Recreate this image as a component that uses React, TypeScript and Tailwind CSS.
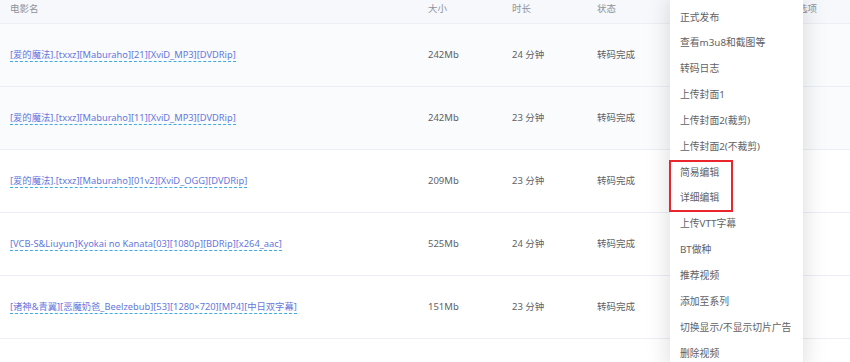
import React from "react";

const rows = [
    { name: "[爱的魔法].[txxz][Maburaho][21][XviD_MP3][DVDRip]", size: "242Mb", dur: "24 分钟", tint: true },
    { name: "[爱的魔法].[txxz][Maburaho][11][XviD_MP3][DVDRip]", size: "242Mb", dur: "23 分钟", tint: true },
    { name: "[爱的魔法].[txxz][Maburaho][01v2][XviD_OGG][DVDRip]", size: "209Mb", dur: "23 分钟", tint: false },
    { name: "[VCB-S&Liuyun]Kyokai no Kanata[03][1080p][BDRip][x264_aac]", size: "525Mb", dur: "24 分钟", tint: false },
    { name: "[诸神&青翼][恶魔奶爸_Beelzebub][53][1280×720][MP4][中日双字幕]", size: "151Mb", dur: "23 分钟", tint: false },
];

const menuItems = [
    "正式发布",
    "查看m3u8和截图等",
    "转码日志",
    "上传封面1",
    "上传封面2(裁剪)",
    "上传封面2(不裁剪)",
    "简易编辑",
    "详细编辑",
    "上传VTT字幕",
    "BT做种",
    "推荐视频",
    "添加至系列",
    "切换显示/不显示切片广告",
    "删除视频",
];

const font = { fontFamily: '"Noto Sans", "Noto Sans CJK SC", sans-serif' };

export default function App() {
    return (
        <div className="relative w-[850px] h-[362px] overflow-hidden bg-white text-[9.5px]" style={font}>
            {/* header */}
            <div className="flex h-[24px] items-center bg-[#f6f8fb] border-b border-[#ebeef5] text-[#909399] pb-[4px]">
                <div className="w-[418px] pl-[10px]">电影名</div>
                <div className="w-[84px] pl-[10px]">大小</div>
                <div className="w-[85px] pl-[10px]">时长</div>
                <div className="w-[211px] pl-[10px]">状态</div>
                <div className="flex-1">选项</div>
            </div>

            {rows.map((r, i) => (
                <div
                    key={i}
                    className={
                        "flex h-[63px] items-center border-b border-[#ebeef5] " +
                        (r.tint ? "bg-[#fafbfd]" : "bg-white")
                    }
                >
                    <div className="w-[418px] pl-[10px]">
                        <span className="text-[9.3px] text-[#6478dc] border-b border-dashed border-[#3fa9e6] leading-[13px] inline-block">
                            {r.name}
                        </span>
                    </div>
                    <div className="w-[84px] pl-[10px] text-[#606266]">{r.size}</div>
                    <div className="w-[85px] pl-[10px] text-[#606266]">{r.dur}</div>
                    <div className="w-[210px] pl-[10px] text-[#606266]">转码完成</div>
                    <div className="flex-1" />
                </div>
            ))}

            {/* dropdown menu */}
            <div className="absolute left-[670px] top-[-2px] w-[133px] bg-white rounded-[4px] shadow-[0_0_24px_rgba(0,0,0,0.15)] pt-[7px] pb-[6px] text-[9.8px]">
                {menuItems.map((m) => (
                    <div key={m} className="h-[25.85px] flex items-center pl-[10px] text-[#606266] whitespace-nowrap">
                        {m}
                    </div>
                ))}
                <div className="absolute left-[-1px] top-[162px] w-[64px] h-[52px] border-2 border-[#e8262b]" />
            </div>
        </div>
    );
}
